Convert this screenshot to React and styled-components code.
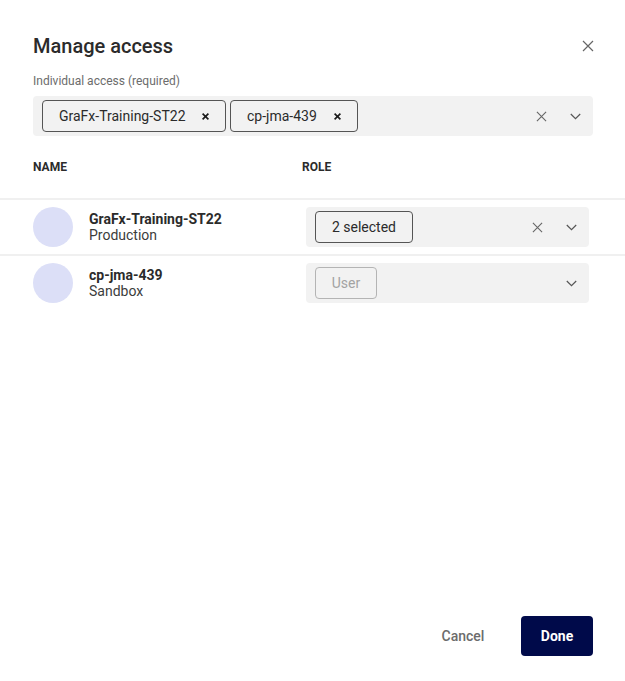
import React from 'react'
import styled, { createGlobalStyle } from 'styled-components'

const GlobalStyle = createGlobalStyle`
  html, body { margin: 0; padding: 0; background: #fff; }
  body { font-family: Roboto, "Liberation Sans", sans-serif; color: #252525; }
  * { box-sizing: border-box; }
`

const Modal = styled.div`
  width: 625px;
  height: 681px;
  display: flex;
  flex-direction: column;
  background: #fff;
`

const Header = styled.header`
  display: flex;
  align-items: center;
  justify-content: space-between;
  padding: 32px 31px 0 33px;
  height: 60px;
`

const Title = styled.h1`
  margin: 0;
  font-size: 20px;
  line-height: 28px;
  font-weight: 500;
  color: #2b2b2b;
`

const IconButton = styled.button`
  display: flex;
  align-items: center;
  justify-content: center;
  width: ${p => p.$size || 16}px;
  height: ${p => p.$size || 16}px;
  padding: 0;
  border: 0;
  background: none;
  color: ${p => p.$color || '#666'};
`

const AccessField = styled.div`
  padding: 13px 32px 0 33px;
`

const Label = styled.div`
  font-size: 12px;
  line-height: 16px;
  color: #6c6c6c;
  margin-bottom: 7px;
`

const Select = styled.div`
  display: flex;
  align-items: center;
  gap: 4px;
  height: 40px;
  padding: 0 10px 0 9px;
  background: #f2f2f2;
  border-radius: 4px;
`

const Chip = styled.div`
  display: flex;
  align-items: center;
  justify-content: ${p => (p.$center ? 'center' : 'space-between')};
  width: ${p => p.$width}px;
  height: 32px;
  padding: ${p => (p.$center ? '0' : '0 16px')};
  border: 1px solid ${p => (p.$disabled ? '#b4b4b4' : '#555')};
  border-radius: 4px;
  font-size: 14px;
  color: ${p => (p.$disabled ? '#a3a3a3' : '#2b2b2b')};
`

const Spacer = styled.div`
  flex: 1;
`

const Controls = styled.div`
  display: flex;
  align-items: center;
  gap: 18px;
`

const TableHead = styled.div`
  display: grid;
  grid-template-columns: 269px 1fr;
  padding: 22px 32px 0 33px;
  height: 64px;
  border-bottom: 2px solid #f0f0f0;
`

const HeadCell = styled.div`
  font-size: 12px;
  line-height: 18px;
  font-weight: 700;
  color: #2b2b2b;
`

const Row = styled.div`
  display: grid;
  grid-template-columns: 273px 283px;
  align-items: center;
  height: 56px;
  padding: 0 0 0 33px;
  border-bottom: 2px solid ${p => (p.$last ? 'transparent' : '#f0f0f0')};
`

const Identity = styled.div`
  display: flex;
  align-items: center;
  gap: 16px;
`

const Avatar = styled.div`
  width: 40px;
  height: 40px;
  border-radius: 50%;
  background: #dcdff7;
`

const NameBlock = styled.div`
  display: flex;
  flex-direction: column;
  font-size: 14px;
  line-height: 16px;
`

const Name = styled.span`
  font-weight: 700;
  color: #2b2b2b;
`

const Env = styled.span`
  color: #3c3c3c;
`

const Footer = styled.footer`
  margin-top: auto;
  display: flex;
  align-items: center;
  justify-content: flex-end;
  gap: 16px;
  padding: 0 32px 25px 0;
`

const CancelButton = styled.button`
  width: 84px;
  height: 40px;
  border: 0;
  background: none;
  font: 500 14px Roboto, sans-serif;
  color: #6c6c6c;
  padding: 0;
`

const DoneButton = styled.button`
  width: 72px;
  height: 40px;
  border: 0;
  border-radius: 4px;
  background: #000a4a;
  color: #fff;
  font: 700 14px Roboto, sans-serif;
  padding: 0;
`

const Cross = ({ size = 12, width = 1.2 }) => (
  <svg width={size} height={size} viewBox="0 0 12 12" fill="none" stroke="currentColor" strokeWidth={width}>
    <path d="M1 1l10 10M11 1L1 11" />
  </svg>
)

const Chevron = () => (
  <svg width="11" height="7" viewBox="0 0 11 7" fill="none" stroke="#555" strokeWidth="1.2">
    <path d="M.8 1l4.7 4.7L10.2 1" />
  </svg>
)

const ChipRemove = () => (
  <IconButton $size={7} $color="#1a1a1a">
    <Cross size={7} width={2.8} />
  </IconButton>
)

const SelectControls = ({ clearable }) => (
  <Controls>
    {clearable && (
      <IconButton $size={16}>
        <Cross size={11} />
      </IconButton>
    )}
    <IconButton $size={16}>
      <Chevron />
    </IconButton>
  </Controls>
)

const rows = [
  { name: 'GraFx-Training-ST22', env: 'Production', chip: '2 selected', width: 98 },
  { name: 'cp-jma-439', env: 'Sandbox', chip: 'User', width: 62, disabled: true },
]

export default function App() {
  return (
    <Modal>
      <GlobalStyle />
      <Header>
        <Title>Manage access</Title>
        <IconButton $size={12}>
          <Cross size={12} />
        </IconButton>
      </Header>

      <AccessField>
        <Label>Individual access (required)</Label>
        <Select>
          <Chip $width={184}>
            GraFx-Training-ST22
            <ChipRemove />
          </Chip>
          <Chip $width={128}>
            cp-jma-439
            <ChipRemove />
          </Chip>
          <Spacer />
          <SelectControls clearable />
        </Select>
      </AccessField>

      <TableHead>
        <HeadCell>NAME</HeadCell>
        <HeadCell>ROLE</HeadCell>
      </TableHead>

      {rows.map((row, i) => (
        <Row key={row.name} $last={i === rows.length - 1}>
          <Identity>
            <Avatar />
            <NameBlock>
              <Name>{row.name}</Name>
              <Env>{row.env}</Env>
            </NameBlock>
          </Identity>
          <Select>
            <Chip $center $width={row.width} $disabled={row.disabled}>
              {row.chip}
            </Chip>
            <Spacer />
            <SelectControls clearable={!row.disabled} />
          </Select>
        </Row>
      ))}

      <Footer>
        <CancelButton>Cancel</CancelButton>
        <DoneButton>Done</DoneButton>
      </Footer>
    </Modal>
  )
}
